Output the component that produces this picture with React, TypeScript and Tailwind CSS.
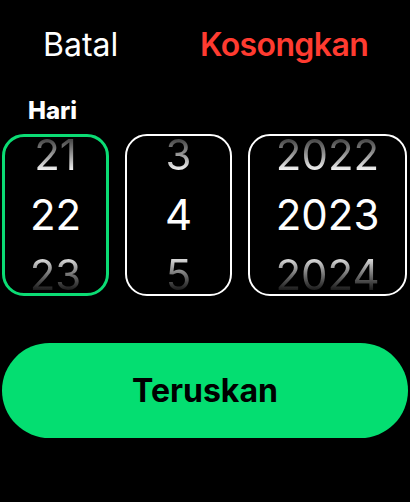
import React from "react";

type Column = {
  values: [string, string, string];
  width: string;
  active?: boolean;
};

const columns: Column[] = [
  { values: ["21", "22", "23"], width: "w-[107px]", active: true },
  { values: ["3", "4", "5"], width: "w-[107px]" },
  { values: ["2022", "2023", "2024"], width: "w-[159px]" },
];

const PickerColumn = ({ column }: { column: Column }) => {
  const [prev, current, next] = column.values;

  return (
    <div
      className={`${column.width} h-[162px] rounded-[22px] overflow-hidden flex flex-col items-center justify-center ${
        column.active
          ? "border-[3px] border-[#0bdc74]"
          : "border-[2.5px] border-white"
      }`}
    >
      <div className="h-[60px] flex items-center justify-center text-[42px]">
        <span className="inline-block leading-[60px] bg-gradient-to-b from-[#4a4a4a] from-25% to-[#f2f2f2] to-75% bg-clip-text text-transparent">
          {prev}
        </span>
      </div>
      <div className="h-[60px] flex items-center justify-center text-[42px] leading-[60px] text-white">
        {current}
      </div>
      <div className="h-[60px] flex items-center justify-center text-[42px]">
        <span className="inline-block leading-[60px] bg-gradient-to-b from-[#d4d4d4] from-25% to-[#1c1c1c] to-75% bg-clip-text text-transparent">
          {next}
        </span>
      </div>
    </div>
  );
};

const App = () => {
  return (
    <div className="w-[410px] h-[502px] bg-black overflow-hidden font-['Inter',sans-serif] flex flex-col">
      <div className="pt-[25px] flex items-center text-[32px] leading-[40px]">
        <div className="pl-[43px] w-[200px] text-white font-normal">Batal</div>
        <div className="text-[#ff3b30] font-semibold tracking-[-0.6px]">
          Kosongkan
        </div>
      </div>

      <div className="mt-[32px] pl-[28px] text-[24px] leading-[28px] font-extrabold text-white">
        Hari
      </div>

      <div className="mt-[9px] px-[2px] flex gap-[16px]">
        {columns.map((column, i) => (
          <PickerColumn key={i} column={column} />
        ))}
      </div>

      <div className="mt-[47px] px-[2px]">
        <button className="w-full h-[95px] rounded-full bg-[#04de71] text-black text-[32px] font-bold leading-[40px] flex items-center justify-center">
          Teruskan
        </button>
      </div>
    </div>
  );
};

export default App;
